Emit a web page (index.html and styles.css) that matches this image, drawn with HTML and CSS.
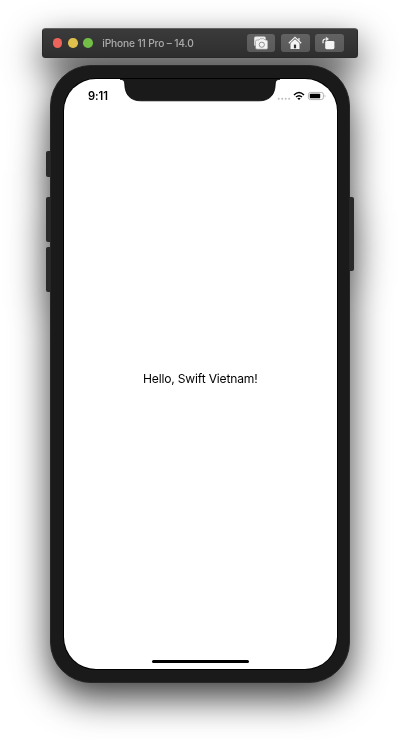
FILE: index.html
```html
<!DOCTYPE html>
<html lang="en">
<head>
<meta charset="utf-8">
<title>iPhone 11 Pro – 14.0</title>
<link rel="stylesheet" href="styles.css">
</head>
<body>
<main class="simulator">
  <header class="toolbar">
    <div class="lights"><i class="light close"></i><i class="light minimize"></i><i class="light zoom"></i></div>
    <h1 class="title">iPhone 11 Pro – 14.0</h1>
    <div class="actions">
      <button class="action" aria-label="Screenshot">
        <svg width="16" height="16" viewBox="0 0 16 16">
          <rect x="1.2" y="1.6" width="11.5" height="9.5" rx="1.5" fill="#ededed"/>
          <path d="M4 5H6L7.2 3.7H10.8L12 5H13.3Q14.8 5 14.8 6.5V12.7Q14.8 14.2 13.3 14.2H4Q2.5 14.2 2.5 12.7V6.5Q2.5 5 4 5Z" fill="#f2f2f2" stroke="#777" stroke-width=".5"/>
          <circle cx="8.8" cy="9.7" r="2.6" fill="none" stroke="#777" stroke-width=".8"/>
        </svg>
      </button>
      <button class="action" aria-label="Home">
        <svg width="16" height="16" viewBox="0 0 16 16">
          <path d="M3.5 7.8L8 3.9L12.5 7.8V14H3.5Z" fill="#f4f4f4"/>
          <path d="M1.8 8.2L8 2.3L14.2 8.2M12 3V6" fill="none" stroke="#f4f4f4" stroke-width="1.2"/>
          <path d="M3 8.4L8 3.8L13 8.4" fill="none" stroke="#555" stroke-width=".5"/>
          <rect x="6.9" y="9.6" width="2.2" height="3.7" fill="#333"/>
        </svg>
      </button>
      <button class="action" aria-label="Rotate">
        <svg width="16" height="16" viewBox="0 0 16 16">
          <rect x="4.2" y="5.9" width="9.2" height="8.3" rx="1.4" fill="#f4f4f4"/>
          <path d="M2 8.2V6.5Q2 4 4.5 4H6" fill="none" stroke="#f4f4f4" stroke-width="1.2"/>
          <path d="M4.8 1.5L8.2 4L4.8 6.4Z" fill="#f4f4f4" stroke="#555" stroke-width=".3"/>
        </svg>
      </button>
    </div>
  </header>
  <section class="phone">
    <i class="key mute"></i><i class="key volume-up"></i><i class="key volume-down"></i><i class="key power"></i>
    <div class="screen">
      <svg class="notch" width="160" height="24" viewBox="0 0 160 24">
        <path d="M0 -1V.3Q4.8 .3 4.8 5C4.8 15 10 21.8 20.5 21.8H139.5C150 21.8 155.2 15 155.2 5Q155.2 .3 160 .3V-1Z" fill="#1a1a1a" stroke="#000" stroke-width=".8"/>
      </svg>
      <div class="status">
        <time class="time">9:11</time>
        <svg class="indicators" width="50" height="12" viewBox="0 0 50 12">
          <g fill="#bdbdbd"><circle cx="1.7" cy="8.8" r="1"/><circle cx="5.2" cy="8.8" r="1"/><circle cx="8.7" cy="8.8" r="1"/><circle cx="12.2" cy="8.8" r="1"/></g>
          <g fill="none" stroke="#000" stroke-width="1.4"><path d="M17 4.9Q22 .1 27 4.9"/><path d="M19 7.1Q22 4.3 25 7.1"/></g>
          <path d="M20.4 8.4Q22 7.1 23.6 8.4L22 10Z"/>
          <rect x="31.4" y="2.4" width="15" height="7.2" rx="2.1" fill="#fff" stroke="#aaa" stroke-width=".9"/>
          <rect x="32.8" y="3.7" width="10.4" height="4.6" rx=".9"/>
          <path d="M47.7 4.6Q49.4 6 47.7 7.4Z" fill="#aaa"/>
        </svg>
      </div>
      <p class="greeting">Hello, Swift Vietnam!</p>
      <i class="home-bar"></i>
    </div>
  </section>
</main>
</body>
</html>
```
FILE: styles.css
```css
* { box-sizing: border-box; }
body {
  margin: 0;
  height: 740px;
  overflow: hidden;
  background: #fff;
  font-family: Inter, "Liberation Sans", sans-serif;
}
.simulator {
  display: flex;
  flex-direction: column;
  align-items: center;
  gap: 7.4px;
  padding-top: 28px;
  filter: drop-shadow(0 15px 18px rgba(0, 0, 0, .77));
}
.toolbar {
  display: flex;
  align-items: center;
  width: 315.5px;
  height: 30px;
  padding: 0 13px 0 9.6px;
  border: 1px solid #292929;
  border-top-color: #626262;
  border-radius: 3.5px;
  background: linear-gradient(#3b3b3b, #2e2e2e);
}
.lights { display: flex; gap: 5.5px; }
.light { width: 9.6px; height: 9.6px; border-radius: 50%; }
.close { background: #ed655a; }
.minimize { background: #e0c04c; }
.zoom { background: #72be47; }
.title {
  margin: 0 auto 0 9.7px;
  font-size: 10.2px;
  font-weight: 500;
  line-height: 14px;
  letter-spacing: -.15px;
  white-space: nowrap;
  color: #acacac;
}
.actions { display: flex; gap: 5.5px; }
.action {
  display: grid;
  place-items: center;
  width: 28.7px;
  height: 17.5px;
  padding: 0;
  border: 0;
  border-radius: 3px;
  background: linear-gradient(#626262, #595959);
}
.phone {
  position: relative;
  width: 300px;
  height: 617.5px;
  padding: 13px 12.5px 12.5px 13px;
  border: 1px solid #262626;
  border-radius: 41px;
  background: #1a1a1a;
}
.key {
  position: absolute;
  z-index: -1;
  left: -5.5px;
  width: 10px;
  border-radius: 2px;
  background: #292929;
}
.mute { top: 85px; height: 26px; }
.volume-up { top: 130.5px; height: 45px; }
.volume-down { top: 180.5px; height: 45px; }
.power { left: auto; right: -4.5px; top: 130.5px; height: 74px; }
.screen {
  position: relative;
  display: flex;
  flex-direction: column;
  align-items: center;
  height: 590px;
  border-radius: 32px;
  background: #fff;
  box-shadow: 0 0 0 1px #000;
}
.notch { position: absolute; top: -.5px; left: 56px; }
.status {
  display: flex;
  justify-content: space-between;
  align-items: center;
  width: 100%;
  height: 34px;
  padding: 0 10px 0 24px;
}
.time { font-size: 11.2px; font-weight: 600; line-height: 14px; letter-spacing: -.1px; color: #000; }
.greeting {
  margin: 256.5px 0 auto;
  font-size: 12.1px;
  line-height: 18px;
  letter-spacing: -.18px;
  white-space: nowrap;
  color: #000;
}
.home-bar { width: 97.5px; height: 3.5px; margin-bottom: 6px; border-radius: 2px; background: #000; }
```
